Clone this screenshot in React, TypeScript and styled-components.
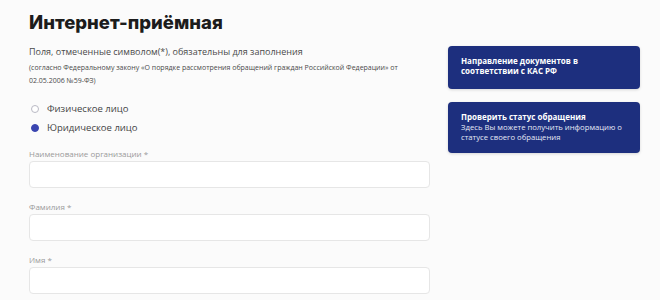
import React from "react";
import styled, { createGlobalStyle } from "styled-components";

const Global = createGlobalStyle`
  html, body { margin: 0; padding: 0; background: #fbfbfb; }
  body { font-family: "Open Sans", "Liberation Sans", sans-serif; }
  * { box-sizing: border-box; }
`;

const Page = styled.div`
  width: 660px;
  height: 300px;
  overflow: hidden;
  padding: 9px 0 0 29px;
`;

const Title = styled.h1`
  margin: 0;
  font-family: "Inter", "Open Sans", sans-serif;
  font-weight: 800;
  font-size: 18.5px;
  line-height: 26px;
  color: #1c1c1c;
`;

const Columns = styled.div`
  display: flex;
  align-items: flex-start;
  gap: 18px;
  margin-top: 10px;
`;

const FormCol = styled.div`
  width: 401px;
  display: flex;
  flex-direction: column;
`;

const Note = styled.div`
  font-size: 9px;
  line-height: 13px;
  color: #4a4a4a;
`;

const SmallNote = styled.div`
  font-size: 7px;
  line-height: 13px;
  color: #4a4a4a;
  margin-top: 3px;
  padding-right: 10px;
`;

const Radios = styled.div`
  display: flex;
  flex-direction: column;
  gap: 5px;
  margin-top: 15px;
  padding-left: 2px;
`;

const RadioRow = styled.label`
  display: flex;
  align-items: center;
  gap: 8px;
  font-size: 9.5px;
  line-height: 14px;
  color: #444;
`;

const Dot = styled.span<{ $on?: boolean }>`
  width: 8px;
  height: 8px;
  border-radius: 50%;
  border: 1px solid ${(p) => (p.$on ? "#3a45b0" : "#b9b9c4")};
  background: ${(p) => (p.$on ? "#3a45b0" : "#fff")};
`;

const Field = styled.div`
  display: flex;
  flex-direction: column;
  margin-top: 13px;
`;

const Label = styled.div`
  font-size: 8px;
  line-height: 12px;
  color: #9a9a9a;
  margin-bottom: 1px;
`;

const Input = styled.div`
  height: 27px;
  border: 1px solid #e6e6e6;
  border-radius: 4px;
  background: #fff;
`;

const Side = styled.div`
  width: 192px;
  display: flex;
  flex-direction: column;
  gap: 13px;
  margin-top: 1px;
`;

const Card = styled.div<{ $min?: number }>`
  background: #1d2f7e;
  border-radius: 4px;
  padding: 10px 13px 10px 13px;
  min-height: ${(p) => p.$min ?? 0}px;
  color: #fff;
  font-size: 7.7px;
  line-height: 10px;
  box-shadow: 0 1px 3px rgba(0, 0, 0, 0.15);
`;

const CardTitle = styled.div`
  font-weight: 700;
  font-size: 8px;
  line-height: 10px;
`;

const CardText = styled.div`
  color: #e6e9f5;
`;

export default function App() {
  return (
    <Page>
      <Global />
      <Title>Интернет-приёмная</Title>
      <Columns>
        <FormCol>
          <Note>Поля, отмеченные символом(*), обязательны для заполнения</Note>
          <SmallNote>
            (согласно Федеральному закону «О порядке рассмотрения обращений граждан Российской Федерации» от 02.05.2006 №59-ФЗ)
          </SmallNote>
          <Radios>
            <RadioRow><Dot />Физическое лицо</RadioRow>
            <RadioRow><Dot $on />Юридическое лицо</RadioRow>
          </Radios>
          <Field>
            <Label>Наименование организации *</Label>
            <Input />
          </Field>
          <Field>
            <Label>Фамилия *</Label>
            <Input />
          </Field>
          <Field>
            <Label>Имя *</Label>
            <Input />
          </Field>
        </FormCol>
        <Side>
          <Card $min={43}>
            <CardTitle>Направление документов в соответствии с КАС РФ</CardTitle>
          </Card>
          <Card $min={51}>
            <CardTitle>Проверить статус обращения</CardTitle>
            <CardText>Здесь Вы можете получить информацию о статусе своего обращения</CardText>
          </Card>
        </Side>
      </Columns>
    </Page>
  );
}
